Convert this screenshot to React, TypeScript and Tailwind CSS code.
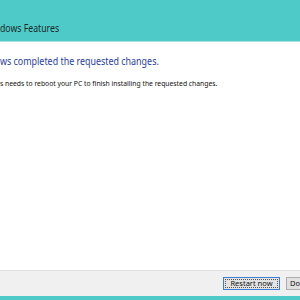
export default function App() {
  return (
    <div className="w-[300px] h-[300px] overflow-hidden flex flex-col bg-[#4ecbc8]" style={{ fontFamily: '"Noto Sans", "Open Sans", sans-serif' }}>
      <div className="h-[41px] shrink-0 flex items-end pb-[8px]">
        <span className="text-[10.5px] leading-none text-[#1e2a2a] whitespace-nowrap origin-left scale-x-[0.83]">dows Features</span>
      </div>
      <div className="h-[1px] bg-[#a9e3e1] shrink-0" />
      <div className="flex-1 bg-white flex flex-col">
        <div className="pt-[13px] text-[#1f3f9e] text-[11px] leading-none whitespace-nowrap origin-left scale-x-[0.81]">ws completed the requested changes.</div>
        <div className="pt-[14px] text-[#111] text-[7px] leading-none whitespace-nowrap origin-left scale-x-[0.97]">s needs to reboot your PC to finish installing the requested changes.</div>
      </div>
      <div className="h-[26px] shrink-0 bg-[#f0f0f0] border-t border-[#dfdfdf] flex items-center gap-[6px] pl-[223px]">
        <div className="w-[57px] h-[13px] shrink-0 border border-[#3c7fd9] bg-[#e3e3e3] p-[1px]">
          <div className="w-full h-full border border-dotted border-[#555] flex items-center justify-center text-[7.5px] leading-none text-[#111] whitespace-nowrap">Restart now</div>
        </div>
        <div className="w-[57px] h-[13px] shrink-0 border border-[#adadad] bg-[#e1e1e1] flex items-center pl-[3px] text-[7.5px] leading-none text-[#111] whitespace-nowrap">Don't restart</div>
      </div>
      <div className="h-[4px] shrink-0 bg-[#4ecbc8]" />
    </div>
  );
}
